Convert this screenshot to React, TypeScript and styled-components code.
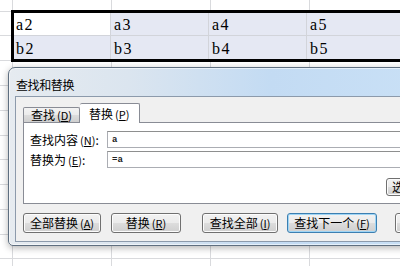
import styled, { createGlobalStyle } from "styled-components";

const GlobalStyle = createGlobalStyle`
  html, body {
    margin: 0;
    padding: 0;
    background: #fff;
    overflow: hidden;
  }
`;

const CJK = `"Noto Sans CJK SC", "Noto Sans", sans-serif`;
const GRID = "#d9dadd";
const SEL = "#e5e8f3";

// Hoja de cálculo de fondo
const Screen = styled.div`
  position: relative;
  width: 400px;
  height: 266px;
  overflow: hidden;
  background: #fff;
`;

const Sheet = styled.div`
  display: flex;
  flex-direction: column;
`;

const GridRow = styled.div<{ $h: number; $line?: boolean }>`
  display: flex;
  flex-shrink: 0;
  height: ${(p) => p.$h}px;
  border-bottom: ${(p) => (p.$line ? `1px solid ${GRID}` : "none")};
`;

const Stub = styled.div`
  width: 12px;
  flex-shrink: 0;
`;

const GridCell = styled.div`
  width: 98px;
  flex-shrink: 0;
  border-left: 1px solid ${GRID};
`;

const BlockRow = styled.div`
  display: flex;
  height: 52px;
  flex-shrink: 0;
`;

/* líneas horizontales de la columna izquierda junto a la tabla */
const BlockStub = styled.div`
  width: 11px;
  flex-shrink: 0;
  background: linear-gradient(
    to bottom,
    transparent 1px,
    ${GRID} 1px 2px,
    transparent 2px 25px,
    ${GRID} 25px 26px,
    transparent 26px 50px,
    ${GRID} 50px 51px,
    transparent 51px
  );
`;

const Table = styled.div`
  width: 430px;
  flex-shrink: 0;
  border: 3px solid #000;
  display: flex;
  flex-direction: column;
`;

const TableRow = styled.div<{ $h: number; $line?: boolean }>`
  display: flex;
  height: ${(p) => p.$h}px;
  border-bottom: ${(p) => (p.$line ? "1px solid #d2d4da" : "none")};
`;

const TableCell = styled.div<{ $first?: boolean; $active?: boolean }>`
  width: ${(p) => (p.$first ? 97 : 98)}px;
  flex-shrink: 0;
  border-right: 1px solid #d2d4da;
  background: ${(p) => (p.$active ? "#fff" : SEL)};
  display: flex;
  align-items: flex-end;
  padding: 0 0 1px ${(p) => (p.$first ? 2 : 3)}px;
  box-sizing: border-box;
  font-family: "Liberation Serif", "DejaVu Serif", serif;
  font-size: 16px;
  line-height: 18px;
  letter-spacing: 1.5px;
  color: #000;
`;

// Diálogo "查找和替换"
const Dialog = styled.div`
  position: absolute;
  left: 8px;
  top: 67px;
  width: 478px;
  height: 179px;
  box-sizing: border-box;
  border: 1px solid #5f6f80;
  border-radius: 7px 7px 5px 5px;
  background: linear-gradient(90deg, #e6ebf0 0%, #dbe5ef 25%, #c3dbf3 55%, #cbe2f7 100%);
  box-shadow: 0 2px 7px rgba(0, 0, 0, 0.3), inset 0 0 0 1px rgba(255, 255, 255, 0.55);
  display: flex;
  flex-direction: column;
  padding: 0 6px 3px 6px;
`;

const TitleBar = styled.div`
  height: 28px;
  flex-shrink: 0;
  display: flex;
  align-items: center;
  padding: 4px 0 0 1px;
  box-sizing: border-box;
  font-family: ${CJK};
  font-size: 12px;
  color: #000;
  letter-spacing: -0.4px;
`;

const Client = styled.div`
  flex: 1;
  background: #f0f0f0;
  border: 1px solid #8c9aab;
  padding: 0 7px;
  display: flex;
  flex-direction: column;
  font-family: ${CJK};
  font-size: 12px;
  color: #000;
`;

const TabStrip = styled.div`
  height: 25px;
  flex-shrink: 0;
  display: flex;
  align-items: flex-end;
`;

const Tab = styled.div<{ $active?: boolean }>`
  position: relative;
  z-index: ${(p) => (p.$active ? 1 : 0)};
  height: ${(p) => (p.$active ? 20 : 15)}px;
  margin-bottom: ${(p) => (p.$active ? -1 : 0)}px;
  box-sizing: border-box;
  padding: ${(p) => (p.$active ? "0 10px 0 9px" : "0 7px 0 7px")};
  border: 1px solid #898c95;
  border-bottom: none;
  border-left: ${(p) => (p.$active ? "none" : "1px solid #898c95")};
  border-radius: 2px 2px 0 0;
  background: ${(p) =>
    p.$active ? "#fff" : "linear-gradient(#f3f3f3, #ebebeb 50%, #dddddd 51%, #cfcfcf)"};
  display: flex;
  align-items: center;
  line-height: 14px;
`;

const Panel = styled.div`
  height: 82px;
  flex-shrink: 0;
  box-sizing: border-box;
  border: 1px solid #898c95;
  background: #fff;
  padding: 8px 8px 7px 6px;
  display: flex;
  flex-direction: column;
  gap: 3px;
`;

const FieldRow = styled.div`
  display: flex;
  align-items: center;
  height: 17px;
`;

const Label = styled.div`
  width: 77px;
  flex-shrink: 0;
  line-height: 14px;
`;

const TextBox = styled.div`
  flex: 1;
  height: 17px;
  box-sizing: border-box;
  border: 1px solid #abadb3;
  border-top-color: #8e8f8f;
  display: flex;
  align-items: center;
  padding-left: 4px;
  font-family: "Liberation Mono", monospace;
  font-size: 9px;
  font-weight: bold;
  color: #222;
`;

const OptionsRow = styled.div`
  display: flex;
  justify-content: flex-end;
  margin-top: 7px;
`;

const Mn = styled.span`
  margin-left: 2px;
  font-size: 11px;
  u {
    text-decoration: underline;
    text-underline-offset: 1px;
  }
`;

const ButtonRow = styled.div`
  display: flex;
  margin-top: 9px;
`;

const Button = styled.div<{ $w: number; $ml?: number; $h?: number; $default?: boolean; $left?: boolean }>`
  width: ${(p) => p.$w}px;
  height: ${(p) => p.$h ?? 20}px;
  margin-left: ${(p) => p.$ml ?? 0}px;
  flex-shrink: 0;
  box-sizing: border-box;
  border: 1px solid ${(p) => (p.$default ? "#3c7fb1" : "#707070")};
  border-radius: 3px;
  background: linear-gradient(#f2f2f2 0%, #ebebeb 50%, #dddddd 51%, #cfcfcf 100%);
  box-shadow: inset 0 0 0 1px ${(p) => (p.$default ? "#9fd5f5" : "#fcfcfc")};
  display: flex;
  align-items: center;
  justify-content: ${(p) => (p.$left ? "flex-start" : "center")};
  padding-left: ${(p) => (p.$left ? 5 : 0)}px;
  line-height: 14px;
  white-space: nowrap;
  overflow: hidden;
`;

const Key = ({ k }: { k: string }) => (
  <Mn>
    (<u>{k}</u>)
  </Mn>
);

const App = () => {
  const lowerRows = [23, 23.75, 23.75, 23.75, 23.75, 23.75, 23.75, 23.75, 23.75];

  return (
    <>
      <GlobalStyle />
      <Screen>
        <Sheet>
          {/* fila superior */}
          <GridRow $h={10}>
            <Stub />
            <GridCell />
            <GridCell />
            <GridCell />
            <GridCell />
          </GridRow>

          {/* TABLA SELECCIONADA */}
          <BlockRow>
            <BlockStub />
            <Table>
              <TableRow $h={22} $line>
                <TableCell $first $active>a2</TableCell>
                <TableCell>a3</TableCell>
                <TableCell>a4</TableCell>
                <TableCell>a5</TableCell>
                <TableCell />
              </TableRow>
              <TableRow $h={23}>
                <TableCell $first>b2</TableCell>
                <TableCell>b3</TableCell>
                <TableCell>b4</TableCell>
                <TableCell>b5</TableCell>
                <TableCell />
              </TableRow>
            </Table>
          </BlockRow>

          {lowerRows.map((h, i) => (
            <GridRow key={i} $h={h} $line>
              <Stub />
              <GridCell />
              <GridCell />
              <GridCell />
              <GridCell />
            </GridRow>
          ))}
        </Sheet>

        <Dialog>
          <TitleBar>查找和替换</TitleBar>
          <Client>
            <TabStrip>
              <Tab>
                查找<Key k="D" />
              </Tab>
              <Tab $active>
                替换<Key k="P" />
              </Tab>
            </TabStrip>

            <Panel>
              <FieldRow>
                <Label>
                  查找内容<Key k="N" />:
                </Label>
                <TextBox>a</TextBox>
              </FieldRow>
              <FieldRow>
                <Label>
                  替换为<Key k="E" />:
                </Label>
                <TextBox>=a</TextBox>
              </FieldRow>
              <OptionsRow>
                <Button $w={76} $h={18} $left>
                  选项<Key k="T" /> &gt;&gt;
                </Button>
              </OptionsRow>
            </Panel>

            {/* BOTONES */}
            <ButtonRow>
              <Button $w={78}>
                全部替换<Key k="A" />
              </Button>
              <Button $w={70} $ml={10}>
                替换<Key k="R" />
              </Button>
              <Button $w={76} $ml={21}>
                查找全部<Key k="I" />
              </Button>
              <Button $w={90} $ml={9} $default>
                查找下一个<Key k="F" />
              </Button>
              <Button $w={76} $ml={18}>
                关闭
              </Button>
            </ButtonRow>
          </Client>
        </Dialog>
      </Screen>
    </>
  );
};

export default App;
